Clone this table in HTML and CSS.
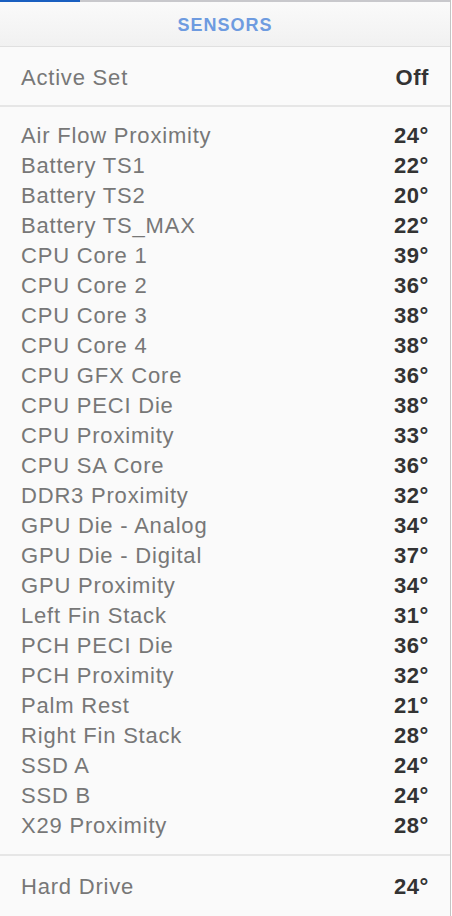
FILE: index.html
```html
<!doctype html>
<html lang="en">

<head>
    <meta charset="UTF-8">
    <title>Sensors</title>
    <link rel="stylesheet" href="styles.css">
</head>

<body>
    <div id="panel">
        <div class="topbar"><span class="progress"></span></div>
        <div class="header">SENSORS</div>
        <div class="row active_set">
            <span class="name">Active Set</span>
            <span class="val">Off</span>
        </div>
        <ul class="list">
            <li><span class="name">Air Flow Proximity</span><span class="val">24°</span></li>
            <li><span class="name">Battery TS1</span><span class="val">22°</span></li>
            <li><span class="name">Battery TS2</span><span class="val">20°</span></li>
            <li><span class="name">Battery TS_MAX</span><span class="val">22°</span></li>
            <li><span class="name">CPU Core 1</span><span class="val">39°</span></li>
            <li><span class="name">CPU Core 2</span><span class="val">36°</span></li>
            <li><span class="name">CPU Core 3</span><span class="val">38°</span></li>
            <li><span class="name">CPU Core 4</span><span class="val">38°</span></li>
            <li><span class="name">CPU GFX Core</span><span class="val">36°</span></li>
            <li><span class="name">CPU PECI Die</span><span class="val">38°</span></li>
            <li><span class="name">CPU Proximity</span><span class="val">33°</span></li>
            <li><span class="name">CPU SA Core</span><span class="val">36°</span></li>
            <li><span class="name">DDR3 Proximity</span><span class="val">32°</span></li>
            <li><span class="name">GPU Die - Analog</span><span class="val">34°</span></li>
            <li><span class="name">GPU Die - Digital</span><span class="val">37°</span></li>
            <li><span class="name">GPU Proximity</span><span class="val">34°</span></li>
            <li><span class="name">Left Fin Stack</span><span class="val">31°</span></li>
            <li><span class="name">PCH PECI Die</span><span class="val">36°</span></li>
            <li><span class="name">PCH Proximity</span><span class="val">32°</span></li>
            <li><span class="name">Palm Rest</span><span class="val">21°</span></li>
            <li><span class="name">Right Fin Stack</span><span class="val">28°</span></li>
            <li><span class="name">SSD A</span><span class="val">24°</span></li>
            <li><span class="name">SSD B</span><span class="val">24°</span></li>
            <li><span class="name">X29 Proximity</span><span class="val">28°</span></li>
        </ul>
        <ul class="list drives">
            <li><span class="name">Hard Drive</span><span class="val">24°</span></li>
        </ul>
    </div>
</body>

</html>
```
FILE: styles.css
```css
* {
    margin: 0;
    padding: 0;
}

li {
    list-style: none;
}

body {
    background-color: #fff;
    font-family: "Liberation Sans", Arial, sans-serif;
    overflow: hidden;
}

#panel {
    width: 450px;
    height: 916px;
    background-color: #fafafa;
    border-right: 1px solid #c4c4c4;
}

.topbar {
    height: 2px;
    background-color: #c8c8cc;
}

.topbar .progress {
    display: block;
    width: 80px;
    height: 2px;
    background-color: #1a5fc0;
}

.header {
    height: 44px;
    line-height: 46px;
    text-align: center;
    font-size: 18px;
    letter-spacing: 1px;
    font-weight: bold;
    color: #6e9be0;
    background: linear-gradient(#fafafa, #f1f1f1);
    border-bottom: 1px solid #e0e0e0;
}

.row,
.list li {
    display: flex;
    justify-content: space-between;
    align-items: center;
    padding: 0 21px;
    font-size: 22px;
    letter-spacing: 0.8px;
    color: #777;
}

.row {
    height: 54px;
    padding-top: 4px;
    border-bottom: 2px solid #e6e6e6;
}

.val {
    font-weight: bold;
    color: #333;
    letter-spacing: 0.6px;
}

.list {
    padding: 14px 0 13px;
    border-bottom: 2px solid #e6e6e6;
}

.list li {
    height: 30px;
}

.list.drives {
    padding-top: 16px;
    border-bottom: none;
}
```
